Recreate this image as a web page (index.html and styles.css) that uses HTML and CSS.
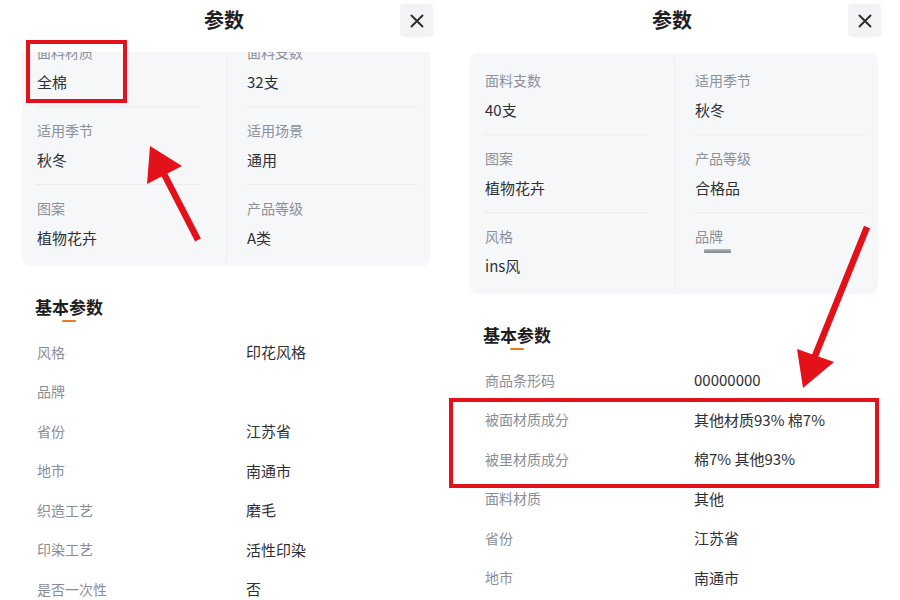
FILE: index.html
```html
<!DOCTYPE html>
<html lang="zh-CN">
<head>
<meta charset="utf-8">
<title>参数</title>
<link rel="stylesheet" href="styles.css">
</head>
<body>
<div class="page">
  <section class="panel panel-scrolled">
    <header class="sheet-head">
      <h1 class="sheet-title">参数</h1>
      <button class="close-btn" aria-label="关闭">
        <svg width="16" height="16" viewBox="0 0 16 16"><path d="M2.5 2.5 L13.5 13.5 M13.5 2.5 L2.5 13.5" stroke="#2b2d31" stroke-width="1.9" stroke-linecap="round"/></svg>
      </button>
    </header>
    <div class="card">
      <div class="cell cell-l"><div class="cell-in"><div class="c-label">面料材质</div><div class="c-value">全棉</div></div></div>
      <div class="cell cell-r"><div class="cell-in"><div class="c-label">面料支数</div><div class="c-value">32支</div></div></div>
      <div class="cell cell-l"><div class="cell-in"><div class="c-label">适用季节</div><div class="c-value">秋冬</div></div></div>
      <div class="cell cell-r"><div class="cell-in"><div class="c-label">适用场景</div><div class="c-value">通用</div></div></div>
      <div class="cell cell-l last"><div class="cell-in"><div class="c-label">图案</div><div class="c-value">植物花卉</div></div></div>
      <div class="cell cell-r last"><div class="cell-in"><div class="c-label">产品等级</div><div class="c-value">A类</div></div></div>
    </div>
    <h2 class="sec-title">基本参数</h2>
    <div class="list">
      <div class="row"><span class="r-label">风格</span><span class="r-value">印花风格</span></div>
      <div class="row"><span class="r-label">品牌</span><span class="r-value"></span></div>
      <div class="row"><span class="r-label">省份</span><span class="r-value">江苏省</span></div>
      <div class="row"><span class="r-label">地市</span><span class="r-value">南通市</span></div>
      <div class="row"><span class="r-label">织造工艺</span><span class="r-value">磨毛</span></div>
      <div class="row"><span class="r-label">印染工艺</span><span class="r-value">活性印染</span></div>
      <div class="row"><span class="r-label">是否一次性</span><span class="r-value">否</span></div>
    </div>
  </section>

  <section class="panel panel-top">
    <header class="sheet-head">
      <h1 class="sheet-title">参数</h1>
      <button class="close-btn" aria-label="关闭">
        <svg width="16" height="16" viewBox="0 0 16 16"><path d="M2.5 2.5 L13.5 13.5 M13.5 2.5 L2.5 13.5" stroke="#2b2d31" stroke-width="1.9" stroke-linecap="round"/></svg>
      </button>
    </header>
    <div class="card">
      <div class="cell cell-l"><div class="cell-in"><div class="c-label">面料支数</div><div class="c-value">40支</div></div></div>
      <div class="cell cell-r"><div class="cell-in"><div class="c-label">适用季节</div><div class="c-value">秋冬</div></div></div>
      <div class="cell cell-l"><div class="cell-in"><div class="c-label">图案</div><div class="c-value">植物花卉</div></div></div>
      <div class="cell cell-r"><div class="cell-in"><div class="c-label">产品等级</div><div class="c-value">合格品</div></div></div>
      <div class="cell cell-l last"><div class="cell-in"><div class="c-label">风格</div><div class="c-value">ins风</div></div></div>
      <div class="cell cell-r last"><div class="cell-in"><div class="c-label">品牌</div><div class="c-value"><span class="blur-bar"></span></div></div></div>
    </div>
    <h2 class="sec-title">基本参数</h2>
    <div class="list">
      <div class="row"><span class="r-label">商品条形码</span><span class="r-value">00000000</span></div>
      <div class="row"><span class="r-label">被面材质成分</span><span class="r-value">其他材质93% 棉7%</span></div>
      <div class="row"><span class="r-label">被里材质成分</span><span class="r-value">棉7% 其他93%</span></div>
      <div class="row"><span class="r-label">面料材质</span><span class="r-value">其他</span></div>
      <div class="row"><span class="r-label">省份</span><span class="r-value">江苏省</span></div>
      <div class="row"><span class="r-label">地市</span><span class="r-value">南通市</span></div>
    </div>
  </section>

  <svg class="annot" width="900" height="600" viewBox="0 0 900 600">
    <rect x="28" y="42" width="97" height="59" fill="none" stroke="#e3121a" stroke-width="4"/>
    <line x1="198" y1="240" x2="163" y2="172" stroke="#e3121a" stroke-width="6.5"/>
    <polygon points="150,146 147,184 182,166" fill="#e3121a"/>
    <rect x="451" y="400" width="426" height="86" fill="none" stroke="#e3121a" stroke-width="4"/>
    <line x1="867" y1="227" x2="815" y2="356" stroke="#e3121a" stroke-width="6.5"/>
    <polygon points="803,388 797,349 834,362" fill="#e3121a"/>
  </svg>
</div>
</body>
</html>
```

FILE: styles.css
```css
* { box-sizing: border-box; }
html, body { margin: 0; padding: 0; background: #ffffff; }
body {
  font-family: "Noto Sans CJK SC", "Noto Sans", sans-serif;
  color: #333;
  width: 900px;
  height: 600px;
  overflow: hidden;
}
.page {
  position: relative;
  display: flex;
  width: 900px;
  height: 600px;
}
.panel {
  position: relative;
  width: 448px;
  height: 600px;
  overflow: hidden;
  flex: none;
}
.panel-scrolled { padding-top: 25px; }
.panel-top { padding-top: 53px; }

.sheet-head {
  position: absolute;
  top: 0;
  left: 0;
  right: 0;
  height: 52px;
  background: #ffffff;
  z-index: 2;
  display: flex;
  align-items: flex-start;
  justify-content: center;
}
.sheet-title {
  margin: 7px 0 0;
  font-size: 20px;
  line-height: 26px;
  font-weight: 600;
  color: #1f2024;
}
.close-btn {
  position: absolute;
  top: 4px;
  left: 400px;
  width: 33px;
  height: 33px;
  border: none;
  border-radius: 4px;
  background: #f2f3f5;
  padding: 0;
  display: flex;
  align-items: center;
  justify-content: center;
}

.card {
  margin: 0 18px 0 22px;
  width: 408px;
  background: #f5f7f9;
  border-radius: 8px;
  box-shadow: 0 1px 2px rgba(0,0,0,0.04);
  display: grid;
  grid-template-columns: 204px 204px;
  padding: 4px 0 3px;
}
.cell { display: flex; }
.cell-l { padding: 0 26px 0 13px; }
.cell-r { padding: 0 13px 0 20px; border-left: 1px solid #eceef1; }
.cell-in {
  flex: 1;
  padding: 13px 0 14px;
  border-bottom: 1px solid #eaecef;
}
.cell-l .cell-in { padding-left: 2px; }
.last .cell-in { border-bottom: none; }
.c-label {
  font-size: 14px;
  line-height: 20px;
  color: #8d9099;
}
.c-value {
  margin-top: 10px;
  font-size: 15px;
  line-height: 20px;
  min-height: 20px;
  color: #2f3035;
}
.blur-bar {
  display: block;
  width: 27px;
  height: 4px;
  margin: -7px 0 0 9px;
  border-radius: 1px;
  background: linear-gradient(180deg, #b9bcc2, #7d8188);
  filter: blur(0.6px);
}

.sec-title {
  margin: 30px 0 0 35px;
  font-size: 17px;
  line-height: 24px;
  font-weight: 700;
  color: #1c1d21;
  display: inline-block;
  position: relative;
}
.sec-title::after {
  content: "";
  display: block;
  width: 14px;
  height: 2px;
  border-radius: 1px;
  background: #f07a1e;
  margin: 1px auto 0;
}
.list { margin-top: 10px; }
.row {
  display: flex;
  height: 39.5px;
  align-items: center;
  padding-left: 37px;
}
.r-label {
  width: 209px;
  flex: none;
  font-size: 14px;
  color: #8a8d95;
}
.r-value {
  font-size: 15px;
  color: #2f3035;
}

.annot {
  position: absolute;
  left: 0;
  top: 0;
  z-index: 5;
  pointer-events: none;
}
```
